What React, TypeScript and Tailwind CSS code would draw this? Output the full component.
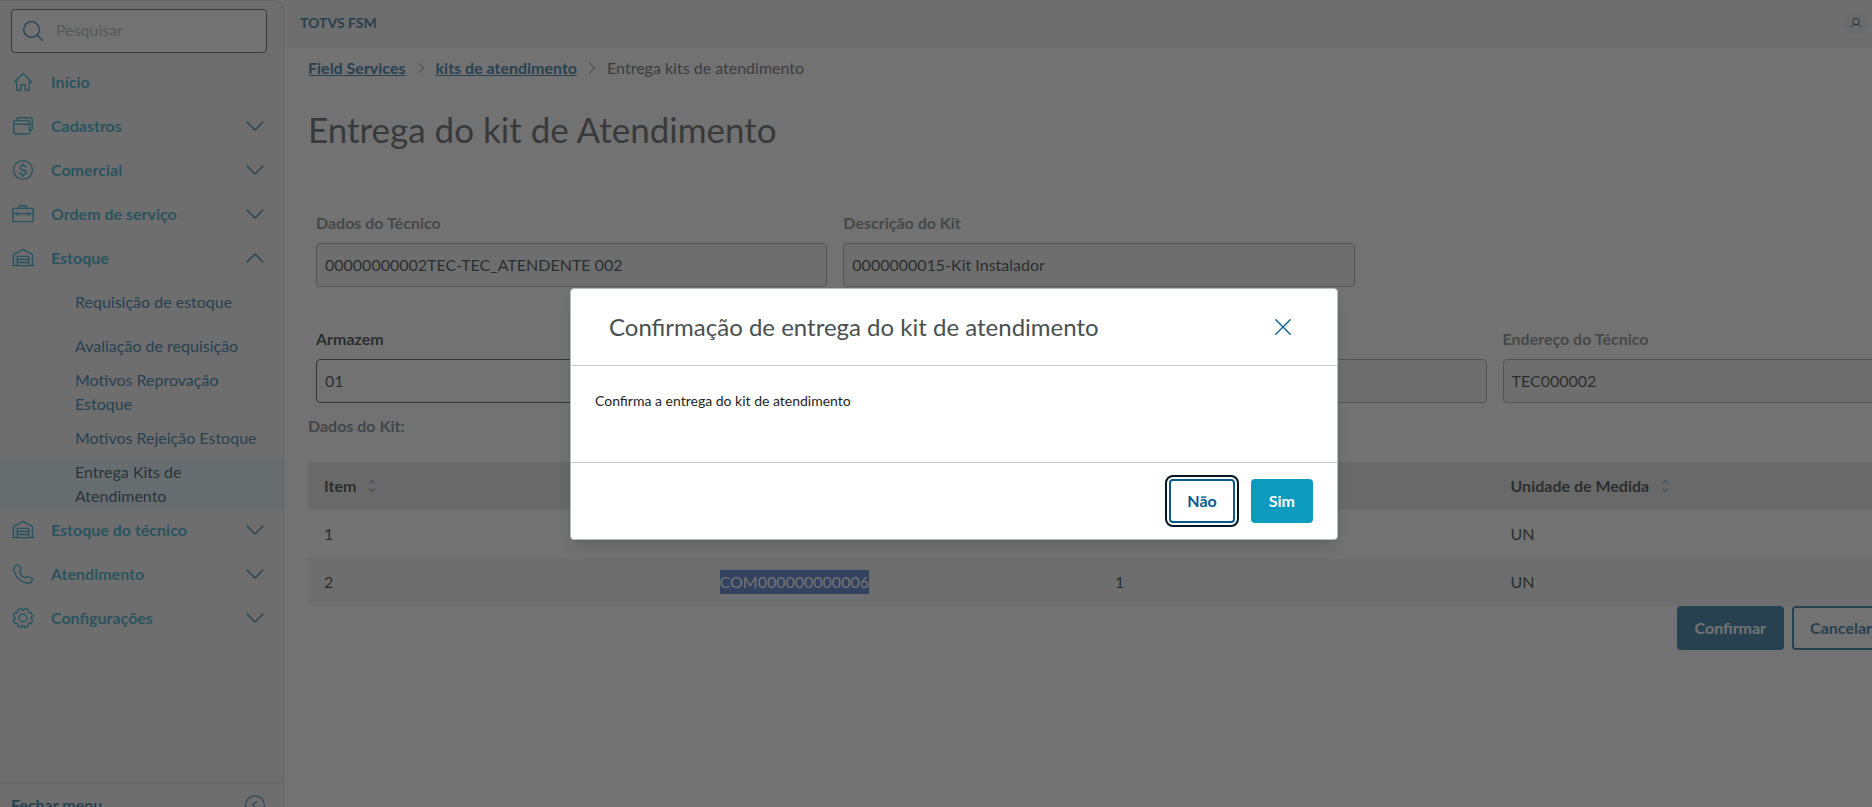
import * as React from "react";
import { clsx } from "clsx";

type IconName =
  | "home"
  | "windows"
  | "money"
  | "toolbox"
  | "warehouse"
  | "phone"
  | "gear";

const ICON_PATHS: Record<IconName, React.ReactNode> = {
  home: <path d="M3.500 12 12 3.500l8.500 8.500h-2.300v8.300h-4v-5.600H9.800v5.600h-4V12z" />,
  windows: (
    <>
      <rect x="2.7" y="6.6" width="16" height="13.4" rx="1.5" />
      <path d="M2.7 10.2h16M6 6.4V5.2c0-.8.6-1.4 1.4-1.4h12.4c.8 0 1.4.6 1.4 1.4v9.6c0 .8-.6 1.4-1.4 1.4h-1" />
    </>
  ),
  money: (
    <>
      <circle cx="12" cy="12" r="9.4" />
      <path d="M15 9.400c0-1.200-1.100-1.900-2.400-1.900h-1.200c-1.400 0-2.400.9-2.400 2.200 0 3.200 6.200 1.400 6.200 4.500 0 1.400-1.100 2.300-2.500 2.300h-1.400c-1.400 0-2.500-.8-2.500-2M12 5.700v1.800M12 16.500v1.800" />
    </>
  ),
  toolbox: (
    <>
      <rect x="1.7" y="6.4" width="20.6" height="13.2" rx="1" />
      <path d="M1.700 11.700h20.600M8.300 6.400V4.700c0-.4.300-.7.7-.7h6c.4 0 .7.3.7.7v1.700M6.500 10.200v3M17.500 10.200v3" />
    </>
  ),
  warehouse: (
    <>
      <path d="M1 19.600h22M2.500 19.600V8.700L12 3.300l9.500 5.400v10.900" />
      <path d="M6.300 19.600v-9.200h11.400v9.200M6.300 13.500h11.400M6.300 16.500h11.400" />
    </>
  ),
  phone: (
    <path d="M5.200 3.300c-1.700.7-2.700 2.500-2.200 5 1.300 6.600 6.200 11.600 12.600 12.700 2.600.4 5-.8 5.800-2.800.4-1-.1-1.900-1-2.300l-2.700-1.200c-1.700-.7-2.700 1.500-4.200 1-2-.8-3.900-2.600-4.700-4.600-.5-1.400 1.500-2.400 1-4L8.700 4.400c-.5-1.300-2-1.700-3.500-1.100z" />
  ),
  gear: (
    <>
      <circle cx="12" cy="12" r="4" />
      <path d="M21.640 13.790 20.080 17.550Q15.900 15.900 17.550 20.080L13.790 21.640Q12 17.500 10.210 21.640L6.450 20.080Q8.100 15.900 3.920 17.550L2.360 13.790Q6.500 12 2.360 10.210L3.920 6.450Q8.100 8.100 6.450 3.920L10.210 2.360Q12 6.500 13.790 2.360L17.550 3.920Q15.900 8.100 20.080 6.450L21.640 10.210Q17.500 12 21.640 13.790z" />
    </>
  ),
};

function MenuIcon({ name }: { name: IconName }) {
  return (
    <svg
      viewBox="0 0 24 24"
      className="size-6 shrink-0 fill-none stroke-current"
      strokeWidth="1.4"
      strokeLinejoin="round"
      strokeLinecap="round"
      aria-hidden="true"
    >
      {ICON_PATHS[name]}
    </svg>
  );
}

function Chevron({ className }: { className?: string }) {
  return (
    <svg
      viewBox="0 0 18 18"
      className={clsx("fill-none stroke-current", className)}
      strokeWidth="1.4"
      strokeLinecap="round"
      strokeLinejoin="round"
      aria-hidden="true"
    >
      <path d="M1 5l8 8 8-8" />
    </svg>
  );
}

type MenuEntry = {
  label: string;
  icon: IconName;
  expandable?: boolean;
  items?: string[];
};

const MENU: MenuEntry[] = [
  { label: "Início", icon: "home" },
  { label: "Cadastros", icon: "windows", expandable: true },
  { label: "Comercial", icon: "money", expandable: true },
  { label: "Ordem de serviço", icon: "toolbox", expandable: true },
  {
    label: "Estoque",
    icon: "warehouse",
    expandable: true,
    items: [
      "Requisição de estoque",
      "Avaliação de requisição",
      "Motivos Reprovação Estoque",
      "Motivos Rejeição Estoque",
      "Entrega Kits de Atendimento",
    ],
  },
  { label: "Estoque do técnico", icon: "warehouse", expandable: true },
  { label: "Atendimento", icon: "phone", expandable: true },
  { label: "Configurações", icon: "gear", expandable: true },
];

const ACTIVE_ITEM = "Entrega Kits de Atendimento";

function Sidebar() {
  return (
    <aside className="flex w-[284px] shrink-0 flex-col rounded-tr-lg border-t border-r border-[#d0d4d6] bg-[#f0f0f0]">
      <div className="px-[11px] pt-2 pb-[7px]">
        <label className="flex h-11 w-64 items-center gap-[13px] rounded border border-[#3c4446] bg-white px-[11px] text-[#045b8f]">
          <svg
            viewBox="0 0 20 20"
            className="size-5 shrink-0 fill-none stroke-current"
            strokeWidth="1.3"
            strokeLinecap="round"
            aria-hidden="true"
          >
            <circle cx="8.5" cy="8.5" r="7.8" />
            <path d="M14.200 14.200 19.300 19.300" />
          </svg>
          <input
            type="search"
            aria-label="Pesquisar"
            placeholder="Pesquisar"
            className="w-full min-w-0 bg-transparent pb-0.5 placeholder:text-[#a5abad] outline-none"
          />
        </label>
      </div>

      <nav className="flex-1">
        <ul>
          {MENU.map((entry) => (
            <li key={entry.label}>
              <button
                type="button"
                aria-expanded={entry.expandable ? !!entry.items : undefined}
                className="flex h-11 w-full items-center gap-4 pr-[19px] pl-[11px] text-left font-bold text-[#0c9abe]"
              >
                <MenuIcon name={entry.icon} />
                <span className="flex-1">{entry.label}</span>
                {entry.expandable && (
                  <Chevron
                    className={clsx(
                      "size-[18px] text-[#045b8f]",
                      entry.items && "rotate-180"
                    )}
                  />
                )}
              </button>
              {entry.items && (
                <ul>
                  {entry.items.map((item) => (
                    <li key={item}>
                      <a
                        href="#"
                        className={clsx(
                          "flex min-h-11 items-center pr-5 pl-[75px] leading-6",
                          item === ACTIVE_ITEM
                            ? "bg-[#daeff5] text-[#04304b]"
                            : "text-[#045b8f]"
                        )}
                      >
                        {item}
                      </a>
                    </li>
                  ))}
                </ul>
              )}
            </li>
          ))}
        </ul>
      </nav>

      <button
        type="button"
        className="flex h-[46px] items-center justify-between border-t border-[#c4c9cb] pr-[18px] pb-0.5 pl-[11px] font-bold text-[#045b8f]"
      >
        Fechar menu
        <svg
          viewBox="0 0 20 20"
          className="size-5 fill-none stroke-current"
          strokeWidth="1.1"
          strokeLinecap="round"
          aria-hidden="true"
        >
          <circle cx="10" cy="10" r="9.3" />
          <path d="m11.500 6.500-4 3.500 4 3.500" />
        </svg>
      </button>
    </aside>
  );
}

type FieldProps = {
  id: string;
  label: string;
  value: string;
  disabled?: boolean;
  className?: string;
};

function Field({ id, label, value, disabled, className }: FieldProps) {
  return (
    <div className={clsx("px-2", className)}>
      <label
        htmlFor={id}
        className={clsx(
          "block pb-2 leading-6 font-bold",
          disabled ? "text-[#6b7375]" : "text-[#10181a]"
        )}
      >
        {label}
      </label>
      <input
        id={id}
        defaultValue={value}
        disabled={disabled}
        className={clsx(
          "h-11 w-full rounded border px-2 pb-0.5 text-[#10181a]",
          disabled
            ? "border-[#8f989a] bg-[#f0f0f0]"
            : "border-[#2c3739] bg-white"
        )}
      />
    </div>
  );
}

const COLUMNS = ["Item", "Produto", "Quantidade", "Unidade de Medida"];

const ROWS = [
  ["1", "COM000000000005", "1", "UN"],
  ["2", "COM000000000006", "1", "UN"],
];

function KitTable() {
  return (
    <table className="w-full table-fixed text-left text-[#10181a]">
      <thead>
        <tr className="h-12 bg-[#e0e0e0]">
          {COLUMNS.map((column) => (
            <th key={column} scope="col" className="px-4 font-bold">
              <span className="flex items-center gap-3">
                {column}
                <svg
                  viewBox="0 0 8 12"
                  className="h-3 w-2 fill-none stroke-[#045b8f]"
                  strokeWidth="0.9"
                  aria-hidden="true"
                >
                  <path d="M1 3.500 4 .7l3 2.800M1 8.500l3 2.800 3-2.800" />
                </svg>
              </span>
            </th>
          ))}
        </tr>
      </thead>
      <tbody>
        {ROWS.map((row, i) => (
          <tr key={row[0]} className="h-12 even:bg-[#f0f0f0]">
            {row.map((cell, j) => (
              <td key={COLUMNS[j]} className="px-4">
                {i === 1 && j === 1 ? (
                  <mark className="inline-block h-6 bg-[#2a5fc4] leading-6 text-white">
                    {cell}
                  </mark>
                ) : (
                  cell
                )}
              </td>
            ))}
          </tr>
        ))}
      </tbody>
    </table>
  );
}

function Crumbs() {
  return (
    <nav aria-label="breadcrumb" className="flex h-6 items-center gap-[9px]">
      <a href="#" className="font-bold text-[#045b8f] underline">
        Field Services
      </a>
      <Chevron className="size-3 -rotate-90 text-[#4a5c60]" />
      <a href="#" className="font-bold text-[#045b8f] underline">
        kits de atendimento
      </a>
      <Chevron className="size-3 -rotate-90 text-[#4a5c60]" />
      <span className="text-[#4a4f50]">Entrega kits de atendimento</span>
    </nav>
  );
}

function ConfirmDialog() {
  return (
    <div className="absolute inset-0 flex items-center justify-center bg-[#363636]/70">
      <div
        role="dialog"
        aria-modal="true"
        aria-labelledby="confirm-title"
        className="w-3xl rounded border border-[#b6bdbf] bg-white shadow-lg"
      >
        <div className="flex h-[77px] items-center justify-between border-b border-[#c8cccd] pr-[46px] pl-[38px]">
          <h2 id="confirm-title" className="text-2xl text-[#4a4f50]">
            Confirmação de entrega do kit de atendimento
          </h2>
          <button type="button" aria-label="Fechar" className="text-[#045b8f]">
            <svg
              viewBox="0 0 16 16"
              className="size-4 stroke-current"
              strokeWidth="1.3"
              strokeLinecap="round"
              aria-hidden="true"
            >
              <path d="M.8.8l14.400 14.400M15.200.8L.8 15.200" />
            </svg>
          </button>
        </div>
        <p className="h-24 px-6 py-[25px] text-sm text-[#1d2426]">
          Confirma a entrega do kit de atendimento
        </p>
        <div className="flex justify-end gap-4 border-t border-[#c8cccd] px-6 py-4 font-bold">
          <button
            type="button"
            className="h-11 rounded border-2 border-[#045b8f] px-4 text-[#045b8f] outline-2 outline-offset-2 outline-[#021627]"
          >
            Não
          </button>
          <button
            type="button"
            className="h-11 rounded bg-[#0c9abe] px-[18px] text-white"
          >
            Sim
          </button>
        </div>
      </div>
    </div>
  );
}

export default function App() {
  return (
    <div className="h-screen overflow-hidden font-['Lato',sans-serif] text-base">
      <div className="relative flex h-[calc(100%+21px)] w-[calc(100%+36px)] bg-white">
        <Sidebar />
        <div className="flex min-w-0 flex-1 flex-col">
          <header className="flex h-12 items-center justify-between bg-[#f0f0f0] pr-10 pb-0.5 pl-4">
            <strong className="text-sm text-[#045b8f]">TOTVS FSM</strong>
            <button
              type="button"
              aria-label="Perfil"
              className="flex size-6 items-center justify-center rounded-full bg-[#e6e8e8] text-[#04304b]"
            >
              <svg
                viewBox="0 0 12 12"
                className="size-3 fill-none stroke-current"
                aria-hidden="true"
              >
                <circle cx="6" cy="4.5" r="3.3" />
                <path d="M1.300 10.500c.4-1.700 1.500-2.600 2.700-2.900h4c1.200.3 2.300 1.200 2.700 2.900" />
              </svg>
            </button>
          </header>

          <main className="pt-2 pr-[18px] pl-6">
            <Crumbs />
            <h1 className="pt-[25px] text-[35px] leading-[48px] text-[#3c4143]">
              Entrega do kit de Atendimento
            </h1>

            <form className="pt-[58px]">
              <div className="grid grid-cols-3">
                <Field
                  id="tecnico"
                  label="Dados do Técnico"
                  value="00000000002TEC-TEC_ATENDENTE 002"
                  disabled
                />
                <Field
                  id="kit"
                  label="Descrição do Kit"
                  value="0000000015-Kit Instalador"
                  disabled
                />
              </div>
              <div className="grid grid-cols-4 pt-10">
                <Field
                  id="armazem"
                  label="Armazem"
                  value="01"
                  className="col-span-2"
                />
                <Field
                  id="armazem-tecnico"
                  label="Armazem do Técnico"
                  value="02"
                  disabled
                />
                <Field
                  id="endereco-tecnico"
                  label="Endereço do Técnico"
                  value="TEC000002"
                  disabled
                />
              </div>
            </form>

            <h3 className="pt-[11px] pb-6 leading-6 font-bold text-[#5b6a6e]">
              Dados do Kit:
            </h3>
            <KitTable />
            <div className="flex justify-end gap-2 font-bold">
              <button
                type="button"
                className="h-11 rounded bg-[#045b8f] px-[18px] text-white"
              >
                Confirmar
              </button>
              <button
                type="button"
                className="h-11 rounded border-2 border-[#045b8f] px-4 text-[#045b8f]"
              >
                Cancelar
              </button>
            </div>
          </main>
        </div>
        <ConfirmDialog />
      </div>
    </div>
  );
}
